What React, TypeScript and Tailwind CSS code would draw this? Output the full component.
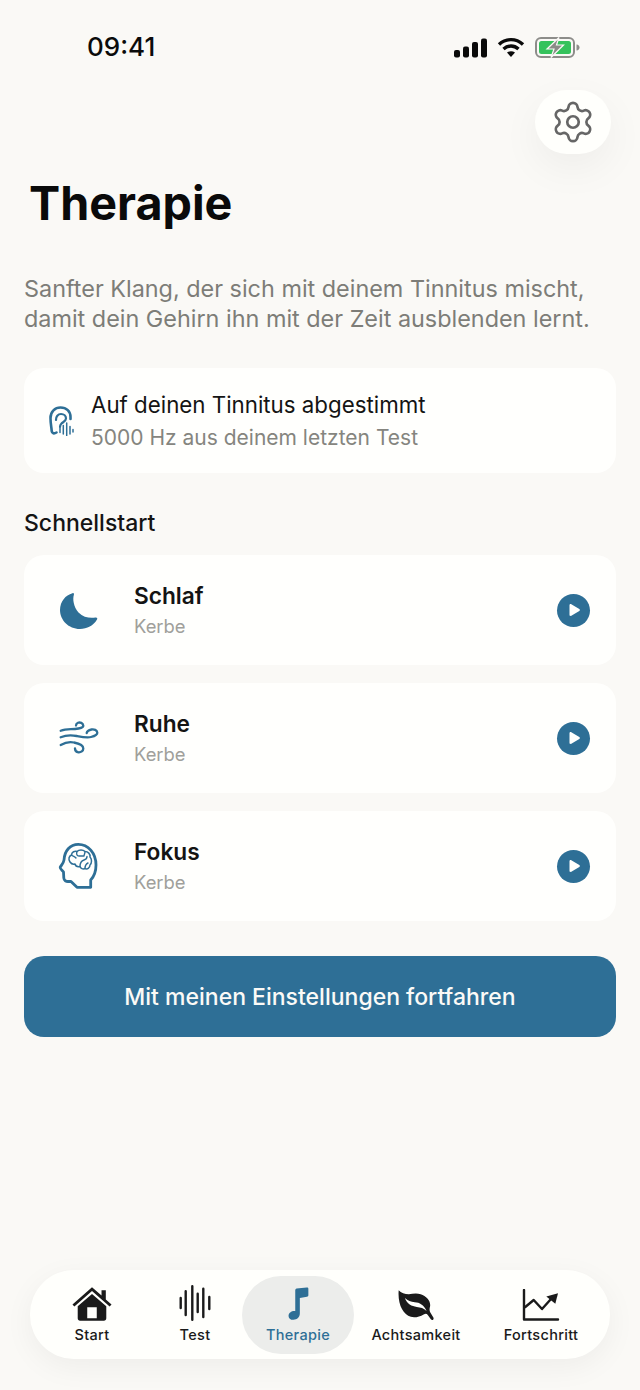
import { Settings } from 'lucide-react'

const quickStarts = [
  { title: 'Schlaf', icon: <MoonIcon /> },
  { title: 'Ruhe', icon: <WindIcon /> },
  { title: 'Fokus', icon: <HeadIcon /> },
]

function MoonIcon() {
  return (
    <svg width="44" height="44" viewBox="0 0 44 44" fill="#2e6f96">
      <path d="M16.500 5.200C17.600 4.800 18.300 5.600 17.900 6.800C16.500 11 17.500 19 22.500 24.500C27.500 29.500 34 30.500 39.500 29.500C41 29.200 41.800 30.400 41 31.500C37.500 37.500 31 41 24 41C12.500 41 4 32 4 22C4 13.500 9.500 7 16.500 5.200z" />
    </svg>
  )
}

function WindIcon() {
  return (
    <svg width="44" height="44" viewBox="0 0 44 44" fill="none" stroke="#2e6f96" strokeWidth="2.300" strokeLinecap="round">
      <path d="M4.700 14.700C10 12.500 15 13.500 19 13C24 12.500 27.500 11.500 27.300 9.500C27 7 24 6 22 6.800C20.500 7.400 20 8.500 20 9.500" />
      <path d="M4.700 21.300C10 19 15.500 19 20.700 20C26 21 31 22 35 21C39 20 41.500 18.500 41.300 16.500C41 14 38 13 35.500 13.500C33 14 31 15 30.700 17" />
      <path d="M4.700 29C9 26.500 14 25.500 18 26.500C23 27.500 27.300 29.500 27.300 32.500C27.300 35 25 36.500 22.500 36.300C20 36 19 34.500 19 32.500" />
    </svg>
  )
}

function HeadIcon() {
  return (
    <svg width="44" height="50" viewBox="0 0 44 50" fill="none" stroke="#2e6f96" strokeLinecap="round" strokeLinejoin="round">
      <path strokeWidth="2.800" d="M34.700 46.300L34.700 39C37.500 36 40 31 40 24C40 12 32 3.300 22.300 3.300C14 3.300 8.500 10 8 19C7.800 21.500 5.500 24 4.300 26C3.500 27.500 6.500 29.500 7.500 31L7.800 37C8 39.500 10 40.700 12.500 40.500L15 40.500L21 46.300z" />
      <path strokeWidth="1.500" d="M14 21C12 18 13 15 15.500 14C15.500 11 19 9.500 21 10.500C23 8.500 27 8.500 29 10.500C32 10.500 34.500 13 34 16C36 18 36 22 34 24C34 27 31 29 29 27.500C27 28.500 24.500 27.500 24 25.500C21.500 26 19.500 25 19 23C17 23.500 15 22.500 14 21z" />
      <path strokeWidth="1.400" d="M21 10.500C20 13 21 15 23 15M15.500 14C17 15.500 19 15.500 20 17M23 15H28M29 10.500C29 12.500 28 14 28 15M24 25.500C24 22 25 20 28 19C30 18.500 31 17 31 15.500M29 27.500C29 25 30 23 32 22" />
    </svg>
  )
}

function EarIcon() {
  return (
    <svg width="26" height="30" viewBox="0 0 26 30" fill="none" stroke="#2e6f96" strokeLinecap="round" strokeLinejoin="round">
      <path strokeWidth="2.600" d="M7.500 26.500C5 28 3 27.500 2.700 25C2.500 21 1.500 18 1.500 12C1.500 5.500 6 1.500 11.500 1.500C17.500 1.500 21.500 5.500 21.500 11L21.500 13" />
      <path strokeWidth="2.200" d="M7 14C6.800 10.500 9 8 12 8C15 8 17 10 17 12.500C17 15 14 16 12.500 17.500C11.500 18.500 11 19.500 11 21" />
      <path strokeWidth="1.500" d="M11 22v4.500M14.300 19.500v8.500M17.700 17v12.500M21 20.500v7.500M24 23.500v2.500" />
    </svg>
  )
}

function PlayButton() {
  return (
    <div className="flex h-[33px] w-[33px] items-center justify-center rounded-full bg-[#2e6f96]">
      <svg width="14" height="14" viewBox="0 0 14 14" fill="#fffffd">
        <path d="M2.500 2.200c0-1 1-1.500 1.800-1l8 4.800c.8.500.8 1.500 0 2l-8 4.800c-.8.500-1.800 0-1.800-1z" />
      </svg>
    </div>
  )
}

function StatusBar() {
  return (
    <div className="flex h-[90px] items-start justify-between pl-[87px] pr-[59px] pt-[31px]">
      <span className="text-[26px] font-medium leading-[32px] text-[#0b0b0b]">09:41</span>
      <div className="flex items-center gap-[10px] pt-[6px]">
        <svg width="33" height="20" viewBox="0 0 33 20" fill="#0a0a0a">
          <rect x="0" y="12" width="6" height="7.500" rx="2" />
          <rect x="9" y="8.500" width="6" height="11" rx="2" />
          <rect x="18" y="4" width="6" height="15.500" rx="2" />
          <rect x="27" y="0.500" width="6" height="19" rx="2" />
        </svg>
        <svg width="28" height="21" viewBox="0 0 28 21" fill="none" stroke="#0a0a0a" strokeWidth="3.400">
          <path d="M2 7.500C9 1 19 1 26 7.500" />
          <path d="M6.500 12c4.500-4 10.500-4 15 0" />
          <path d="M14 20l-4-4.500c2.400-1.800 5.600-1.800 8 0z" fill="#0a0a0a" stroke="none" />
        </svg>
        <svg width="46" height="21" viewBox="0 0 46 21">
          <rect x="1" y="1" width="38" height="19" rx="5" fill="none" stroke="#8d8d8a" strokeWidth="2" />
          <rect x="4" y="4" width="32" height="13" rx="2.500" fill="#35c25c" />
          <path d="M41.500 7.500c2 .2 3 1.500 3 3s-1 2.800-3 3z" fill="#8d8d8a" />
          <path d="M24 0.500L12 12h7l-3 8.500L28.500 8h-7z" fill="#8b8b88" stroke="#faf9f6" strokeWidth="1.200" />
        </svg>
      </div>
    </div>
  )
}

function NavItem({ label, icon, active, width }: { label: string; icon: React.ReactNode; active?: boolean; width: string }) {
  return (
    <div className={`flex h-[78px] flex-col items-center justify-center gap-[4px] rounded-[39px] pt-[1px] ${width} ${active ? 'bg-[#ecedeb]' : ''}`}>
      <div className="flex h-[36px] items-end justify-center">{icon}</div>
      <span className={`text-[14.5px] font-medium leading-[20px] tracking-[0.3px] ${active ? 'text-[#2e6f96]' : 'text-[#1a1a1a]'}`}>{label}</span>
    </div>
  )
}

export default function App() {
  return (
    <div className="flex h-[1390px] w-[640px] flex-col overflow-hidden bg-[#faf9f6] font-['Inter',sans-serif]">
      <StatusBar />

      <div className="flex justify-end pr-[29px]">
        <div className="flex h-[64px] w-[76px] items-center justify-center rounded-[32px] bg-[#fffffc] shadow-[0_14px_40px_rgba(0,0,0,0.05)]">
          <Settings size={46} strokeWidth={1.4} color="#666666" />
        </div>
      </div>

      <h1 className="mt-[21px] pl-[29px] text-[46.7px] font-bold leading-[56px] text-[#0a0a0a]">Therapie</h1>

      <p className="mt-[43px] whitespace-nowrap pl-[24px] text-[23.4px] leading-[30px] text-[#7d7d78]">
        Sanfter Klang, der sich mit deinem Tinnitus mischt,
        <br />
        damit dein Gehirn ihn mit der Zeit ausblenden lernt.
      </p>

      <div className="mx-[24px] mt-[34px] flex h-[105px] items-center gap-[16px] rounded-[20px] bg-[#fffffd] pl-[25px]">
        <EarIcon />
        <div className="pt-[1px]">
          <p className="text-[22.3px] leading-[33px] text-[#141414]">Auf deinen Tinnitus abgestimmt</p>
          <p className="text-[21px] leading-[33px] text-[#85857f]">5000 Hz aus deinem letzten Test</p>
        </div>
      </div>

      <h2 className="mt-[36px] pl-[24px] text-[23px] font-medium leading-[28px] text-[#141414]">Schnellstart</h2>

      <div className="mx-[24px] mt-[18px] flex flex-col gap-[18px]">
        {quickStarts.map(({ title, icon }) => (
          <div key={title} className="flex h-[110px] items-center rounded-[20px] bg-[#fffffd] pl-[32px] pr-[26px]">
            <div className="flex w-[44px] justify-center">{icon}</div>
            <div className="ml-[34px] flex-1 pt-[1px]">
              <p className="text-[22.7px] font-semibold leading-[30px] text-[#141414]">{title}</p>
              <p className="text-[18.4px] leading-[30px] text-[#a0a09b]">Kerbe</p>
            </div>
            <PlayButton />
          </div>
        ))}
      </div>

      <button className="mx-[24px] mt-[35px] h-[81px] rounded-[20px] bg-[#2e6f96] pt-[2px] text-[23px] font-medium text-[#fbfaf7]">
        Mit meinen Einstellungen fortfahren
      </button>

      <nav className="mx-[30px] mb-[31px] mt-auto flex h-[89px] items-center rounded-[44px] bg-[#fffffc] pl-[6px] shadow-[0_8px_30px_rgba(0,0,0,0.05)]">
        <NavItem
          width="w-[112px]"
          label="Start"
          icon={
            <svg width="40" height="35" viewBox="0 0 42 36" fill="#1a1a1a">
              <path d="M21 1L.5 19l2 2.200L21 5l18.500 16.200 2-2.200-6-5.200V4h-4.500v5.700z" />
              <path fillRule="evenodd" d="M21 8L6 21v12.500C6 35 7 36 8.500 36h25c1.500 0 2.500-1 2.500-2.500V21zM16 22h10v11.500H16z" />
            </svg>
          }
        />
        <NavItem
          width="w-[94px]"
          label="Test"
          icon={
            <svg width="32" height="36" viewBox="0 0 32 36" stroke="#1a1a1a" strokeWidth="2.400" strokeLinecap="round">
              <path d="M1.700 13v10M6.700 6.300v23.700M13.300 1.200v33.600M18.700 8.700v18.300M24.300 3.700v28.300M30.300 12v12" />
            </svg>
          }
        />
        <NavItem
          width="w-[112px]"
          active
          label="Therapie"
          icon={
            <svg width="22" height="35" viewBox="0 0 24 36" fill="#2e6f96">
              <path d="M9 3.500c0-1 .5-1.800 1.500-2L21.500.5c1.200-.1 1.800.5 1.800 1.500v7c0 1-.5 1.500-1.500 1.700l-7.800 1.300V29c0 4-3 6.800-7 6.800-3.500 0-5.300-1.800-5.300-4.300 0-3 2.800-5.300 6.500-5.300.5 0 .8 0 .8.100z" />
            </svg>
          }
        />
        <NavItem
          width="w-[124px]"
          label="Achtsamkeit"
          icon={
            <svg width="36" height="31" viewBox="0 0 36.500 31" fill="#1a1a1a">
              <path
                fillRule="evenodd"
                d="M0.700 0C3 3 7 4 11 4C15 3.500 19 2.800 23 4C29 6 33.500 11 32.500 16.500C32 18.500 31.700 20 32.500 22L36 28C36.500 29.500 35 31 33.500 29.800L30 25C29 23.500 28 23.500 26 24.500C22 27 17 28 13 27C5 24.500 -.5 14 .7 0zM7 8C10 11 13 12 17 12.300C22 12.500 26 15 29 21C26 18 23 17.500 19 17C14 16.500 9 14 7 8z"
              />
            </svg>
          }
        />
        <NavItem
          width="w-[126px]"
          label="Fortschritt"
          icon={
            <svg width="38" height="32" viewBox="0 0 38 32" fill="none" stroke="#1a1a1a" strokeWidth="2.400" strokeLinecap="round" strokeLinejoin="round">
              <path d="M2 1V30.500H36" />
              <path d="M3.300 18L11.700 11L20 20L29 10" />
              <path d="M36 4.200L24.300 7.500L33.300 14.800z" fill="#1a1a1a" stroke="none" />
            </svg>
          }
        />
      </nav>
    </div>
  )
}
